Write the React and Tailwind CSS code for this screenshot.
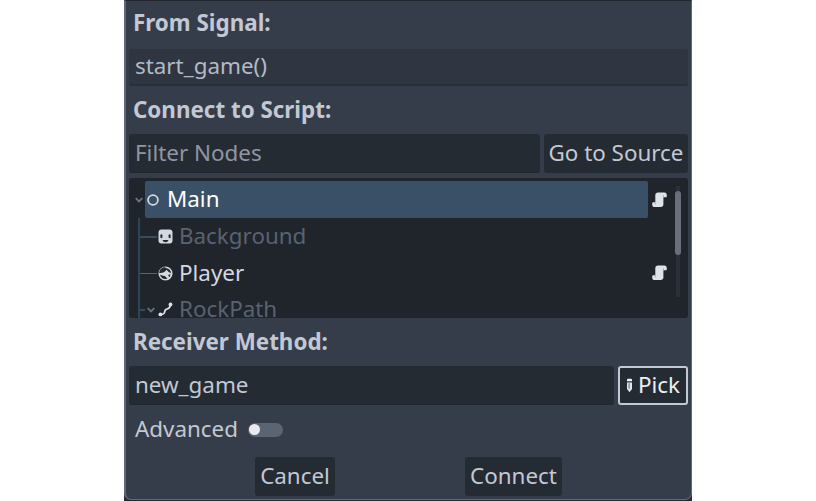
import React from "react";

function Heading({ children, className = "" }) {
  return (
    <div className={"flex items-center pl-[4px] text-[22.4px] font-bold leading-none text-[#c2c8d4] " + className}>
      {children}
    </div>
  );
}

function ScriptIcon() {
  return (
    <svg className="h-4 w-4 shrink-0" viewBox="0 0 16 16">
      <path
        d="M6 0.6C4.4 0.6 3.3 1.7 3.3 3.2V10.3H1.2C.2 10.3.2 11 .2 12.4C.2 14.2 1.3 15 2.6 15H8.6C10.4 15 11.4 14 11.4 12.3V5.3H13.9C14.8 5.3 14.8 4.3 14.8 3.2C14.8 1.4 13.8.6 12.4.6Z"
        fill="#dfe3e9"
      />
      <path d="M11.4 5.3V3.2M3.3 10.3V12.4" stroke="#a9afba" strokeWidth="1" fill="none" />
    </svg>
  );
}

function Chevron() {
  return (
    <svg className="h-2 w-2 shrink-0" viewBox="0 0 8 8" fill="none" stroke="#6b7482" strokeWidth="1.8">
      <path d="M.7 2.2L4 5.5L7.3 2.2" />
    </svg>
  );
}

function SpriteIcon() {
  return (
    <svg className="h-[15px] w-[15px] shrink-0" viewBox="0 0 15 15">
      <rect x=".5" y=".5" width="14" height="14" rx="3" fill="#d3d8e1" />
      <rect x="2.4" y="5.2" width="2" height="4" rx="1" fill="#252b33" />
      <rect x="10.6" y="5.2" width="2" height="4" rx="1" fill="#252b33" />
      <path d="M4.5 11H10.5C10 12.8 9 13.2 7.5 13.2S5 12.8 4.5 11Z" fill="#252b33" />
    </svg>
  );
}

function BallIcon() {
  return (
    <svg className="h-[15px] w-[15px] shrink-0" viewBox="0 0 15 15">
      <circle cx="7.5" cy="7.5" r="6.3" fill="none" stroke="#d3d8e1" strokeWidth="1.5" />
      <path d="M1.2 7.2C4 7.6 6.4 6 7 3.2L7.6 1.2C4 .8 1.2 3.5 1.2 7.2Z" fill="#252b33" />
      <path d="M1.2 7C4 7.5 6.8 6.2 8.4 3.8L11 6.2L14 7.5C14 10 12.2 12.5 10 13.4L7.2 10.2L4 9.4L1.2 8.2Z" fill="#d3d8e1" />
      <path d="M10 9L12.4 8.2L11.8 11.4Z" fill="#252b33" />
    </svg>
  );
}

function PathIcon() {
  return (
    <svg className="h-[15px] w-[15px] shrink-0" viewBox="0 0 15 15">
      <path d="M2.4 12.4C8 12.6 6 9.6 7.3 8C8.6 6.4 12.4 7.4 12.4 2.4" stroke="#dfe3e9" strokeWidth="1.8" fill="none" />
      <circle cx="2.4" cy="12.4" r="1.9" fill="#dfe3e9" />
      <circle cx="12.5" cy="2.4" r="1.9" fill="#dfe3e9" />
    </svg>
  );
}

function PencilIcon() {
  return (
    <svg className="h-[15px] w-[7px] shrink-0" viewBox="0 0 7 15">
      <path d="M1 3.2V1.8Q1 .8 2 .8H5Q6 .8 6 1.8V3.2Z" fill="#f0f2f5" />
      <path d="M1 4.6H6V11L3.5 14.3L1 11Z" fill="#e3e6eb" />
      <path d="M2.3 5.2H4V10.8H2.3Z" fill="#9299a4" />
    </svg>
  );
}

const fieldClass = "flex items-center rounded-[3px] bg-[#252b33] pl-[6px] text-[#c2c8d4]";
const buttonClass = "flex items-center justify-center rounded-[3px] bg-[#252b33] text-[#c2c8d4]";

export default function App() {
  return (
    <main className="flex h-[501px] w-[816px] justify-center overflow-hidden bg-white font-['Noto_Sans',sans-serif] text-[22.4px] leading-none">
      <div className="h-[501px] w-[568px] bg-[linear-gradient(to_bottom,transparent_490px,#252b33_490px)]">
        <section className="h-[500px] w-full rounded-b-[7px] border-t border-r border-b border-l-2 border-[#606977] border-t-[#22272f] bg-[#363d4a] pr-[3px] pl-[3px]">
          <Heading className="h-[48px] pb-[3px]">From Signal:</Heading>
          <div className="flex h-[37px] items-center rounded-[3px] border-b-2 border-[#292f39] bg-[#2f3641] pl-[6px] text-[#b4bac5]">
            start_game()
          </div>
          <Heading className="h-[48px]">Connect to Script:</Heading>
          <div className="flex h-[39px] gap-1">
            <div className="flex w-[411px] items-center rounded-[3px] border-b border-[#20252c] bg-[#252b33] pl-[6px] text-[#9096a1]">
              Filter Nodes
            </div>
            <button className={buttonClass + " flex-1"}>Go to Source</button>
          </div>

          <div className="mt-[5px] flex h-[140px] overflow-hidden rounded-[3px] bg-[#20252c]">
            <div className="w-[519px] pt-[3px]">
              <div className="flex h-[37px] items-center pl-[6px]">
                <Chevron />
                <div className="ml-[2px] flex h-full flex-1 items-center rounded-[2px] bg-[#3a5067] pl-[2px] text-white">
                  <svg className="h-3 w-3" viewBox="0 0 12 12">
                    <circle cx="6" cy="6" r="4.9" fill="none" stroke="#d3d8e1" strokeWidth="1.8" />
                  </svg>
                  <span className="ml-[8px]">Main</span>
                </div>
              </div>
              <div className="ml-[9px] border-l-2 border-[#2e4355]">
                <div className="flex h-[37px] items-center">
                  <span className="mr-px h-[2px] w-[17px] bg-[#334c60]" />
                  <SpriteIcon />
                  <span className="ml-[6px] text-[#596270]">Background</span>
                </div>
                <div className="flex h-[36px] items-center">
                  <span className="mr-px h-px w-[17px] bg-[#5a6370]" />
                  <BallIcon />
                  <span className="ml-[6px] text-[#d3d8e1]">Player</span>
                </div>
                <div className="flex h-[37px] items-center">
                  <span className="mr-[2px] h-[2px] w-[5px] bg-[#334c60]" />
                  <Chevron />
                  <span className="w-[3px]" />
                  <PathIcon />
                  <span className="ml-[6px] text-[#596270]">RockPath</span>
                </div>
              </div>
            </div>
            <div className="ml-[4px] w-4 pt-[14px]">
              <ScriptIcon />
              <div className="h-[57px]" />
              <ScriptIcon />
            </div>
            <div className="ml-[7px] flex h-[119px] w-[6px] flex-col items-center pt-[8px]">
              <div className="h-[5px] w-1 bg-[#29303a]" />
              <div className="h-[64px] w-[6px] shrink-0 rounded-full bg-[#696e79]" />
              <div className="w-1 flex-1 bg-[#29303a]" />
            </div>
          </div>

          <Heading className="h-[48px]">Receiver Method:</Heading>
          <div className="flex h-[39px] gap-1">
            <div className={fieldClass + " w-[485px] border-b border-[#20252c]"}>new_game</div>
            <button className="flex flex-1 items-center justify-center gap-[5px] rounded-[3px] border-2 border-[#c2c8d4] bg-[#252b33] text-[#eceef2]">
              <PencilIcon />
              Pick
            </button>
          </div>
          <div className="flex h-[52px] items-center gap-[10px] pb-[3px] pl-[6px] text-[#c2c8d4]">
            Advanced
            <span className="flex h-[14px] w-[35px] items-center rounded-full bg-[#5a6472] pl-px">
              <span className="h-[11px] w-[11px] rounded-full bg-[#e9ebef]" />
            </span>
          </div>
          <div className="flex h-[39px] gap-[130px] pl-[126px]">
            <button className={buttonClass + " w-[80px]"}>Cancel</button>
            <button className={buttonClass + " w-[97px]"}>Connect</button>
          </div>
        </section>
      </div>
    </main>
  );
}
